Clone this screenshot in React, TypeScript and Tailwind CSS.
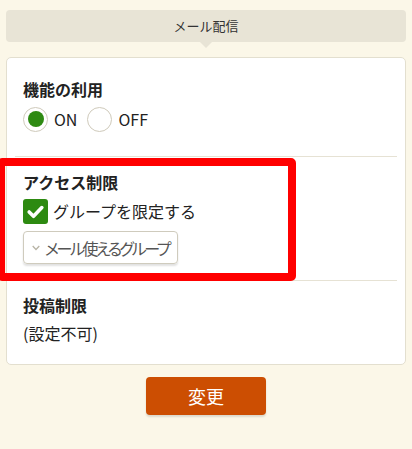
import React from "react";

export default function App() {
  return (
    <div
      className="relative w-[412px] h-[449px] bg-[#fbf7e8] pt-[10px] px-[6px] text-[#222]"
      style={{ fontFamily: '"Noto Sans CJK JP", "Noto Sans", sans-serif' }}
    >
      <div className="relative h-[32px] bg-[#e8e4d6] rounded-[4px] flex items-center justify-center text-[13px] text-[#333]">
        メール配信
        <div className="absolute left-1/2 -translate-x-1/2 top-full w-0 h-0 border-l-[6px] border-r-[6px] border-t-[6px] border-l-transparent border-r-transparent border-t-[#e8e4d6]" />
      </div>

      <div className="mt-[15px] h-[308px] bg-white border border-[#e3dfcf] rounded-[5px] flex flex-col">
        <div className="px-[16px] pt-[20px] pb-[24px]">
          <div className="text-[16px] leading-[22px] font-bold">機能の利用</div>
          <div className="mt-[6px] flex items-center text-[16px] leading-[26px] text-[#222]">
            <span className="w-[25px] h-[25px] rounded-full border-[1.5px] border-[#cfcabb] flex items-center justify-center">
              <span className="w-[16px] h-[16px] rounded-full bg-[#2e8a12]" />
            </span>
            <span className="ml-[6px]">ON</span>
            <span className="ml-[10px] w-[25px] h-[25px] rounded-full border-[1.5px] border-[#cfcabb]" />
            <span className="ml-[6px]">OFF</span>
          </div>
        </div>
        <div className="mx-[8px] h-px bg-[#e6e2d4]" />
        <div className="px-[16px] pt-[14px] pb-[16px]">
          <div className="text-[16px] leading-[22px] font-bold">アクセス制限</div>
          <div className="mt-[6px] flex items-center text-[16px] leading-[25px] text-[#222]">
            <span className="w-[25px] h-[25px] rounded-[3px] bg-[#2d8a11] flex items-center justify-center">
              <svg width="19" height="19" viewBox="0 0 24 24" fill="none" stroke="white" strokeWidth="4.5" strokeLinecap="round" strokeLinejoin="round">
                <path d="M4 12.5l5.5 5.5L20 7" />
              </svg>
            </span>
            <span className="ml-[5px]">グループを限定する</span>
          </div>
          <div className="mt-[7px] inline-flex items-center h-[33px] pl-[8px] pr-[8px] border border-[#cfcbbd] rounded-[4px] shadow-[0_2px_2px_rgba(0,0,0,0.12)] text-[16px] text-[#555] tracking-[-2.4px] [font-feature-settings:'palt']">
            <svg width="8" height="6" viewBox="0 0 8 6" fill="none" stroke="#b8b4a6" strokeWidth="1.3">
              <path d="M0.7 1L4 4.5 7.3 1" />
            </svg>
            <span className="ml-[5px]">メール使えるグループ</span>
          </div>
        </div>
        <div className="mx-[8px] h-px bg-[#e6e2d4]" />
        <div className="px-[16px] pt-[13px]">
          <div className="text-[16px] leading-[22px] font-bold">投稿制限</div>
          <div className="mt-[6px] text-[16px] leading-[22px] text-[#222]">(設定不可)</div>
        </div>
      </div>

      <div className="mt-[12px] flex justify-center">
        <div className="w-[120px] h-[38px] bg-[#cc4e02] rounded-[4px] flex items-center justify-center text-white text-[18px] shadow-[0_2px_2px_rgba(0,0,0,0.12)]">
          変更
        </div>
      </div>

      <div className="absolute left-[-3px] top-[158px] w-[299px] h-[123px] border-[8px] border-[#ff0000] rounded-[5px] pointer-events-none" />
    </div>
  );
}
